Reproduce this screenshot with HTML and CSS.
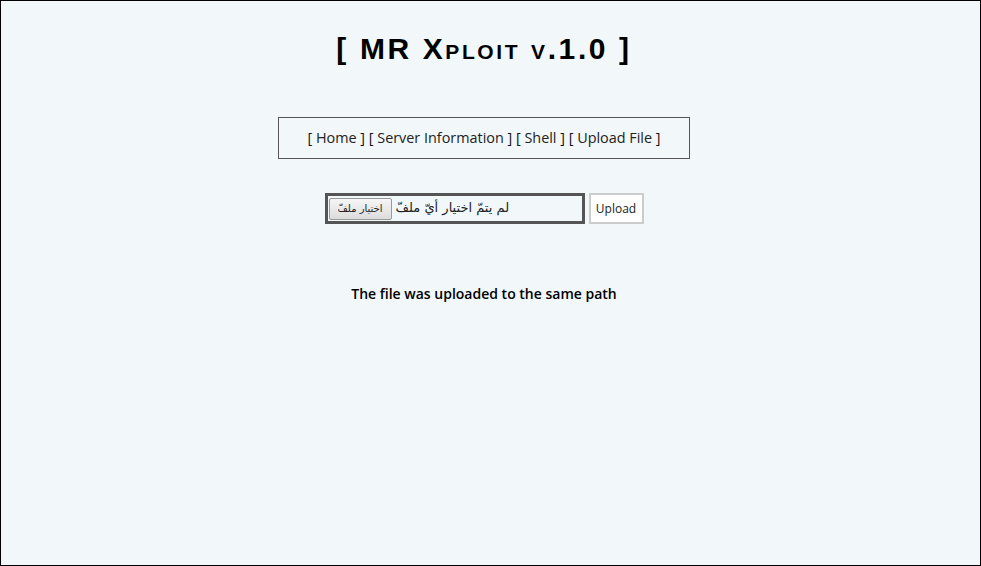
FILE: index.html
```html
<!DOCTYPE html>
<html>
<head>
<meta charset="utf-8">
<link rel="stylesheet" href="styles.css">
</head>
<body>
<div class="frame">
  <h1 class="title">[ MR Xploit v.1.0 ]</h1>
  <nav class="nav">[ <a href="#">Home</a> ] [ <a href="#">Server Information</a> ] [ <a href="#">Shell</a> ] [ <a href="#">Upload File</a> ]</nav>
  <form class="upload">
    <div class="file">
      <span class="file-btn">اختيار ملفّ</span>
      <span class="file-status">لم يتمّ اختيار أيّ ملفّ</span>
    </div>
    <button type="button" class="submit">Upload</button>
  </form>
  <p class="msg">The file was uploaded to the same path</p>
</div>
</body>
</html>
```
FILE: styles.css
```css
html, body {
  margin: 0;
  padding: 0;
  background: #f2f7f9;
}
.frame {
  box-sizing: border-box;
  width: 981px;
  height: 566px;
  border: 1px solid #000;
  padding: 0 13px 0 0;
  display: flex;
  flex-direction: column;
  align-items: center;
  font-family: "Open Sans", "DejaVu Sans", sans-serif;
  color: #111;
}
.title {
  margin: 30px 0 0;
  font-family: "Liberation Sans", sans-serif;
  font-variant: small-caps;
  font-weight: bold;
  font-size: 30px;
  line-height: 36px;
  letter-spacing: 2.6px;
  color: #000;
}
.nav {
  margin-top: 50px;
  width: 410px;
  border: 1px solid #555;
  display: flex;
  align-items: center;
  justify-content: center;
  font-size: 14.4px;
  white-space: pre;
  padding-bottom: 2px;
  box-sizing: content-box;
  height: 38px;
}
.nav a {
  color: #222;
  text-decoration: none;
}
.upload {
  margin: 34px 0 0;
  display: flex;
  gap: 4px;
}
.file {
  box-sizing: border-box;
  width: 260px;
  height: 31px;
  border: 3px solid #555;
  display: flex;
  align-items: center;
  gap: 4px;
  padding: 0 0 0 1px;
  font-family: "DejaVu Sans", sans-serif;
}
.file-status {
  font-size: 13px;
  color: #222;
  direction: rtl;
  padding-bottom: 3px;
}
.file-btn {
  box-sizing: border-box;
  height: 22px;
  padding: 0 8px;
  border: 1px solid #999;
  border-radius: 2px;
  background: linear-gradient(#f6f6f6, #dcdcdc);
  font-size: 10px;
  line-height: 20px;
  color: #222;
  direction: rtl;
}
.submit {
  box-sizing: border-box;
  height: 31px;
  width: 55px;
  border: 2px solid #ccc;
  background: #fff;
  font-family: "Open Sans", sans-serif;
  font-size: 12px;
  color: #222;
  padding: 0;
}
.msg {
  margin: 60px 0 0;
  font-size: 14px;
  font-weight: 600;
  color: #000;
}
```
